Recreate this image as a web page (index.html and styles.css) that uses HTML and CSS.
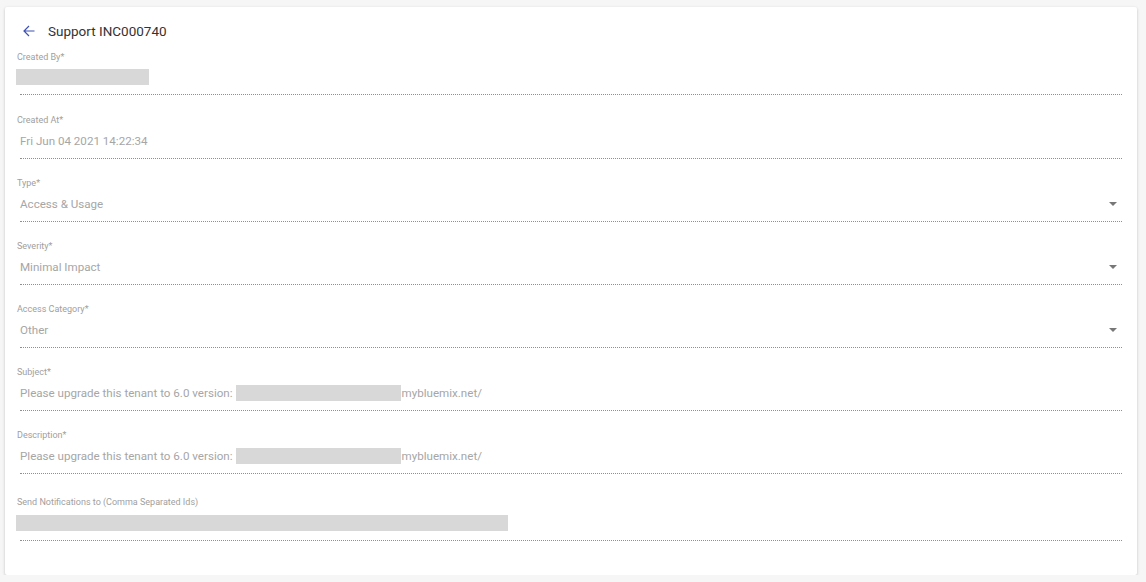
FILE: index.html
```html
<!DOCTYPE html>
<html>
<head>
<meta charset="utf-8">
<link rel="stylesheet" href="styles.css">
</head>
<body>
<div class="card">
  <div class="header">
    <svg class="back" width="12" height="12" viewBox="0 0 12 12"><path d="M11.5 6H1M6 1L1 6l5 5" fill="none" stroke="#3f51b5" stroke-width="1.2"/></svg>
    <span class="title">Support INC000740</span>
  </div>

  <div class="field first">
    <div class="label">Created By*</div>
    <div class="value"><span class="mask mask-short"></span></div>
    <div class="line"></div>
  </div>

  <div class="field">
    <div class="label">Created At*</div>
    <div class="value"><span class="text">Fri Jun 04 2021 14:22:34</span></div>
    <div class="line"></div>
  </div>

  <div class="field">
    <div class="label">Type*</div>
    <div class="value"><span class="text">Access &amp; Usage</span><span class="caret"></span></div>
    <div class="line"></div>
  </div>

  <div class="field">
    <div class="label">Severity*</div>
    <div class="value"><span class="text">Minimal Impact</span><span class="caret"></span></div>
    <div class="line"></div>
  </div>

  <div class="field">
    <div class="label">Access Category*</div>
    <div class="value"><span class="text">Other</span><span class="caret"></span></div>
    <div class="line"></div>
  </div>

  <div class="field">
    <div class="label">Subject*</div>
    <div class="value"><span class="text">Please upgrade this tenant to 6.0 version: <span class="mask mask-url"></span>mybluemix.net/</span></div>
    <div class="line"></div>
  </div>

  <div class="field">
    <div class="label">Description*</div>
    <div class="value"><span class="text">Please upgrade this tenant to 6.0 version: <span class="mask mask-url"></span>mybluemix.net/</span></div>
    <div class="line"></div>
  </div>

  <div class="field last">
    <div class="label">Send Notifications to (Comma Separated Ids)</div>
    <div class="value"><span class="mask mask-long"></span></div>
    <div class="line"></div>
  </div>
</div>
</body>
</html>
```

FILE: styles.css
```css
html, body {
  margin: 0;
  padding: 0;
  background: #f6f6f6;
  font-family: Roboto, "Liberation Sans", sans-serif;
}

.card {
  margin: 7px 9px 0 5px;
  height: 568px;
  box-sizing: border-box;
  background: #fff;
  box-shadow: 0 1px 3px rgba(0, 0, 0, 0.22);
  border-radius: 2px;
  padding: 12px 15px 0 11px;
}

.header {
  display: flex;
  align-items: center;
  height: 24px;
  padding-left: 7px;
}

.back {
  display: block;
  margin-right: 13px;
}

.title {
  font-size: 13.5px;
  color: #333;
}

.field {
  display: flex;
  flex-direction: column;
  padding-top: 18px;
}

.field.first {
  padding-top: 8px;
  margin-bottom: 1px;
}

.field.first .value {
  margin-top: 2px;
}

.field.last {
  padding-top: 22px;
}

.label {
  height: 12px;
  line-height: 12px;
  font-size: 9px;
  color: #a0a0a0;
  padding-left: 1px;
}

.value {
  margin-top: 3px;
  height: 24px;
  display: flex;
  align-items: center;
  justify-content: space-between;
}

.text {
  padding-left: 4px;
  font-size: 11.6px;
  color: #a6a6a6;
  display: flex;
  align-items: center;
}

.mask {
  display: inline-block;
  background: #d8d8d8;
  height: 16px;
}

.mask-short { width: 133px; }
.mask-long { width: 492px; }
.mask-url { width: 165px; margin-left: 3px; margin-right: 1px; }

.caret {
  width: 0;
  height: 0;
  border-left: 4px solid transparent;
  border-right: 4px solid transparent;
  border-top: 4px solid #777;
  margin-right: 5px;
}

.line {
  margin-top: 5px;
  margin-left: 4px;
  border-bottom: 1px dotted #8f8f8f;
}
```
